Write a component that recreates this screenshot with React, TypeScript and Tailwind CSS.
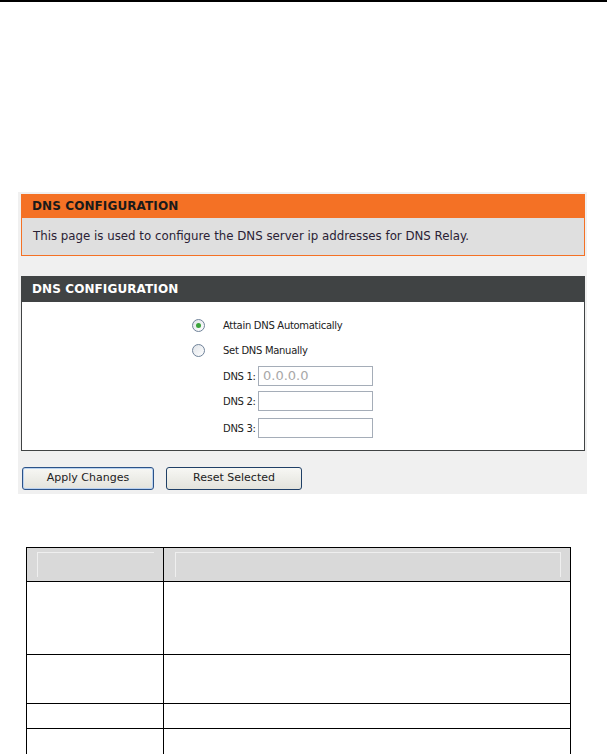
import React from "react";

const font = { fontFamily: '"DejaVu Sans", Tahoma, Verdana, sans-serif' };

function Radio({ checked }: { checked?: boolean }) {
  return (
    <div className="w-[13px] h-[13px] rounded-full border border-[#6f8299] bg-gradient-to-br from-[#dfe3e8] to-white flex items-center justify-center">
      {checked && <div className="w-[5px] h-[5px] rounded-full bg-[#3aa33a]" />}
    </div>
  );
}

function DnsRow({ label, value }: { label: string; value?: string }) {
  return (
    <div className="flex items-center h-[20px]">
      <span className="text-[10px] text-[#222] w-[35px] tracking-[-0.3px]">{label}</span>
      <div className="w-[115px] h-[20px] border border-[#a5adb8] bg-white flex items-center pl-[4px] text-[13px] text-[#a8a8a8]">
        {value}
      </div>
    </div>
  );
}

export default function App() {
  return (
    <div className="w-[607px] h-[754px] bg-white overflow-hidden" style={font}>
      <div className="h-[2px] bg-black" />
      <div className="h-[190px]" />
      {/* screenshot region */}
      <div className="ml-[18px] w-[569px] h-[302px] bg-[#f0f0f0] pt-[2px] pl-[3px]">
        <div className="w-[564px]">
          <div className="h-[24px] bg-[#f47125] flex items-center pl-[11px]">
            <span className="text-[12px] font-bold text-[#1a1a1a] tracking-[0.1px]">DNS CONFIGURATION</span>
          </div>
          <div className="h-[38px] bg-[#dfdfdf] border border-t-0 border-[#f47125] flex items-center pl-[11px]">
            <span className="text-[11.8px] text-[#2a2235]">
              This page is used to configure the DNS server ip addresses for DNS Relay.
            </span>
          </div>
        </div>
        <div className="h-[20px]" />
        <div className="w-[564px]">
          <div className="h-[26px] bg-[#404344] flex items-center pl-[11px]">
            <span className="text-[12px] font-bold text-white tracking-[0.1px]">DNS CONFIGURATION</span>
          </div>
          <div className="h-[149px] bg-white border border-t-0 border-[#404344] pl-[170px] pt-[16px]">
            <div className="flex items-center h-[14px]">
              <div className="w-[31px]"><Radio checked /></div>
              <span className="text-[10px] text-[#222] tracking-[-0.3px]">Attain DNS Automatically</span>
            </div>
            <div className="flex items-center h-[14px] mt-[11px]">
              <div className="w-[31px]"><Radio /></div>
              <span className="text-[10px] text-[#222] tracking-[-0.3px]">Set DNS Manually</span>
            </div>
            <div className="pl-[31px] mt-[9px] flex flex-col gap-[5px]">
              <DnsRow label="DNS 1:" value="0.0.0.0" />
              <DnsRow label="DNS 2:" />
              <div className="mt-[2px]"><DnsRow label="DNS 3:" /></div>
            </div>
          </div>
        </div>
        <div className="flex gap-[12px] mt-[16px] pl-[1px]">
          <button className="w-[132px] h-[23px] rounded-[3px] border border-[#2b5288] bg-gradient-to-b from-[#f7f7f4] to-[#e3e3dc] shadow-[inset_0_0_0_1px_#b9d1f0] text-[11px] text-[#222]">
            Apply Changes
          </button>
          <button className="w-[136px] h-[23px] rounded-[3px] border border-[#1f3f66] bg-gradient-to-b from-[#f7f7f4] to-[#e3e3dc] text-[11px] text-[#222]">
            Reset Selected
          </button>
        </div>
      </div>
      <div className="h-[53px]" />
      {/* table */}
      <div className="ml-[26px] w-[545px] border-t border-l border-r border-black">
        <div className="flex h-[34px] bg-[#d9d9d9] border-b border-black">
          <div className="w-[137px] border-r border-black p-[4px] pl-[10px] pr-[9px]">
            <div className="h-[25px] border-t border-l border-[#efefef]" />
          </div>
          <div className="flex-1 py-[4px] pl-[11px] pr-[9px]">
            <div className="h-[25px] border-t border-l border-r border-[#efefef]" />
          </div>
        </div>
        <div className="flex h-[73px] border-b border-black">
          <div className="w-[137px] border-r border-black" />
          <div className="flex-1" />
        </div>
        <div className="flex h-[49px] border-b border-black">
          <div className="w-[137px] border-r border-black" />
          <div className="flex-1" />
        </div>
        <div className="flex h-[25px] border-b border-black">
          <div className="w-[137px] border-r border-black" />
          <div className="flex-1" />
        </div>
        <div className="flex h-[40px]">
          <div className="w-[137px] border-r border-black" />
          <div className="flex-1" />
        </div>
      </div>
    </div>
  );
}
